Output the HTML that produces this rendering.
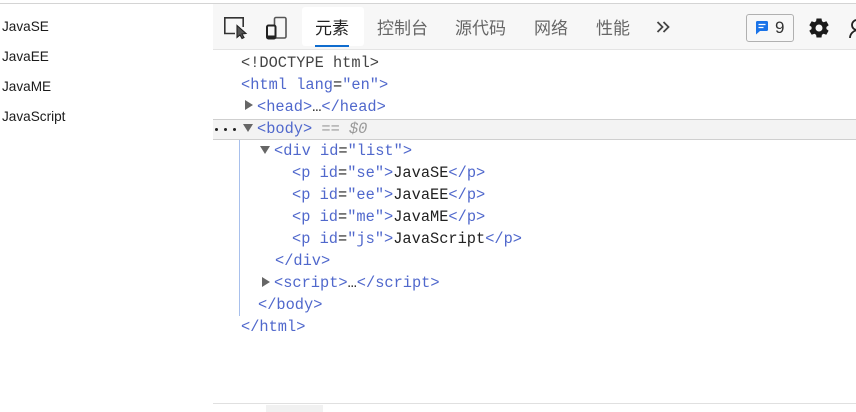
<!DOCTYPE html>
<html><head><meta charset="utf-8"><style>
html,body{margin:0;padding:0;width:856px;height:412px;overflow:hidden;background:#fff}
div,span{position:absolute;white-space:pre}
span.i{position:static}
.p{left:2px;font:13.6px/22px "Liberation Sans","Noto Sans CJK SC",sans-serif;color:#1a1a1a}
.l{font:15.33px/22px "Liberation Mono",monospace;color:#222;height:22px}
.t,.t span{color:#5068cc}
.n{color:#1c3a80}.v{color:#a0246a}
.tab{top:15px;font:17px/24px "Noto Sans CJK SC","WenQuanYi Zen Hei",sans-serif;color:#666}
.tri{width:0;height:0}
.r{border-top:5px solid transparent;border-bottom:5px solid transparent;border-left:8px solid #666}
.d{border-left:5.5px solid transparent;border-right:5.5px solid transparent;border-top:8px solid #666}
.dot{width:3px;height:3px;border-radius:50%;background:#222;top:128px}
</style></head><body>
<div style="left:0;top:3px;width:856px;height:1px;background:#d4d4d4"></div>
<div class="p" style="top:16px">JavaSE</div>
<div class="p" style="top:46px">JavaEE</div>
<div class="p" style="top:76px">JavaME</div>
<div class="p" style="top:106px">JavaScript</div>

<div style="left:213px;top:4px;width:643px;height:45px;background:#f7f7f7;border-bottom:1px solid #e4e4e4"></div>
<div style="left:302px;top:7px;width:62px;height:39px;background:#fff;border-radius:3px"></div>
<div style="left:315px;top:45px;width:34px;height:2px;background:#0f6cce"></div>

<svg style="position:absolute;left:213px;top:4px" width="90" height="45" viewBox="0 0 90 45" fill="none">
<path d="M22 29.500H11.800V13.800H30.200V23" stroke="#333" stroke-width="1.600"/>
<path d="M24 21.500v12l3-2.500 2 3.500 2-1-2-3.500 4-.5z" fill="#555" stroke="#222" stroke-width="1.100"/>
<path d="M63 34H71.500a1.500 1.500 0 0 0 1.500-1.500V15a1.500 1.500 0 0 0-1.500-1.500H63a1.500 1.500 0 0 0-1.500 1.500v6" stroke="#555" stroke-width="1.600"/>
<rect x="54" y="21.500" width="8.500" height="13" rx="1.500" stroke="#222" stroke-width="2"/>
<rect x="54" y="31.500" width="8.500" height="3" fill="#222"/>
</svg>

<div class="tab" style="left:315px;color:#222">元素</div>
<div class="tab" style="left:377px">控制台</div>
<div class="tab" style="left:455px">源代码</div>
<div class="tab" style="left:534px">网络</div>
<div class="tab" style="left:596px">性能</div>

<svg style="position:absolute;left:656px;top:21px" width="14" height="12" viewBox="0 0 14 12" fill="none" stroke="#444" stroke-width="1.800">
<path d="M1.500 1l5 5-5 5M7.500 1l5 5-5 5"/>
</svg>

<div style="left:746px;top:14px;width:46px;height:26px;border:1px solid #b0b0b0;border-radius:3px"></div>
<svg style="position:absolute;left:755px;top:21px" width="14" height="14" viewBox="0 0 14 14">
<path d="M2 0H12a1.500 1.500 0 0 1 1 1V9a1.500 1.500 0 0 1-1 1H5L1 13.500V1a1.500 1.500 0 0 1 1-1z" fill="#1a73e8"/>
<path d="M3.500 3.500H10.500M3.500 6.500H8.500" stroke="#fff" stroke-width="1.300"/>
</svg>
<div style="left:775px;top:16px;font:17px/24px 'Liberation Sans',sans-serif;color:#333">9</div>

<svg style="position:absolute;left:807px;top:16px" width="24" height="24" viewBox="0 0 24 24">
<path fill="#1a1a1a" d="M19.400 13a7.600 7.600 0 0 0 0-2l2.300-1.800-2.300-4-2.700 1.100a7.500 7.500 0 0 0-1.700-1L14.500 2.500h-5L9.100 5.300a7.500 7.500 0 0 0-1.700 1L4.700 5.200l-2.400 4L4.600 11a7.600 7.600 0 0 0 0 2l-2.300 1.800 2.400 4 2.700-1.100a7.500 7.500 0 0 0 1.700 1l.4 2.800h5l.4-2.800a7.500 7.500 0 0 0 1.700-1l2.700 1.100 2.300-4zM12 15.500a3.500 3.500 0 1 1 0-7 3.500 3.500 0 0 1 0 7z"/>
</svg>
<svg style="position:absolute;left:849px;top:18px" width="7" height="22" viewBox="0 0 7 22" fill="none" stroke="#222" stroke-width="1.800">
<circle cx="8" cy="7" r="5"/><path d="M1 20c0-4 3-7 7-8"/>
</svg>

<div style="left:213px;top:119px;width:643px;height:19px;background:#f3f3f3;border-top:1px solid #cfcfcf;border-bottom:1px solid #cfcfcf"></div>
<div style="left:239px;top:140px;width:1px;height:176px;background:#a8c0ec"></div>
<div class="dot" style="left:215px"></div>
<div class="dot" style="left:224px"></div>
<div class="dot" style="left:233px"></div>

<div class="tri r" style="left:245px;top:100px"></div>
<div class="tri d" style="left:243px;top:124px"></div>
<div class="tri d" style="left:260px;top:146px"></div>
<div class="tri r" style="left:262px;top:277px"></div>

<div class="l t" style="left:241px;top:52px"><span class="i" style="color:#444">&lt;!DOCTYPE html&gt;</span></div>
<div class="l t" style="left:241px;top:74px">&lt;html <span class="i n">lang</span><span class="i" style="color:#222">=</span><span class="i v">"en"</span>&gt;</div>
<div class="l t" style="left:257px;top:96px">&lt;head&gt;<span class="i" style="color:#222">…</span>&lt;/head&gt;</div>
<div class="l t" style="left:257px;top:118px">&lt;body&gt; <span class="i" style="color:#999;font-style:italic">== $0</span></div>
<div class="l t" style="left:274px;top:140px">&lt;div <span class="i n">id</span><span class="i" style="color:#222">=</span><span class="i v">"list"</span>&gt;</div>
<div class="l t" style="left:292px;top:162px">&lt;p <span class="i n">id</span><span class="i" style="color:#222">=</span><span class="i v">"se"</span>&gt;<span class="i" style="color:#222">JavaSE</span>&lt;/p&gt;</div>
<div class="l t" style="left:292px;top:184px">&lt;p <span class="i n">id</span><span class="i" style="color:#222">=</span><span class="i v">"ee"</span>&gt;<span class="i" style="color:#222">JavaEE</span>&lt;/p&gt;</div>
<div class="l t" style="left:292px;top:206px">&lt;p <span class="i n">id</span><span class="i" style="color:#222">=</span><span class="i v">"me"</span>&gt;<span class="i" style="color:#222">JavaME</span>&lt;/p&gt;</div>
<div class="l t" style="left:292px;top:228px">&lt;p <span class="i n">id</span><span class="i" style="color:#222">=</span><span class="i v">"js"</span>&gt;<span class="i" style="color:#222">JavaScript</span>&lt;/p&gt;</div>
<div class="l t" style="left:275px;top:250px">&lt;/div&gt;</div>
<div class="l t" style="left:274px;top:272px">&lt;script&gt;<span class="i" style="color:#222">…</span>&lt;/script&gt;</div>
<div class="l t" style="left:258px;top:294px">&lt;/body&gt;</div>
<div class="l t" style="left:241px;top:316px">&lt;/html&gt;</div>

<div style="left:213px;top:403px;width:643px;height:1px;background:#e0e0e0"></div>
<div style="left:266px;top:405px;width:57px;height:7px;background:#f1f1f1"></div>
</body></html>
